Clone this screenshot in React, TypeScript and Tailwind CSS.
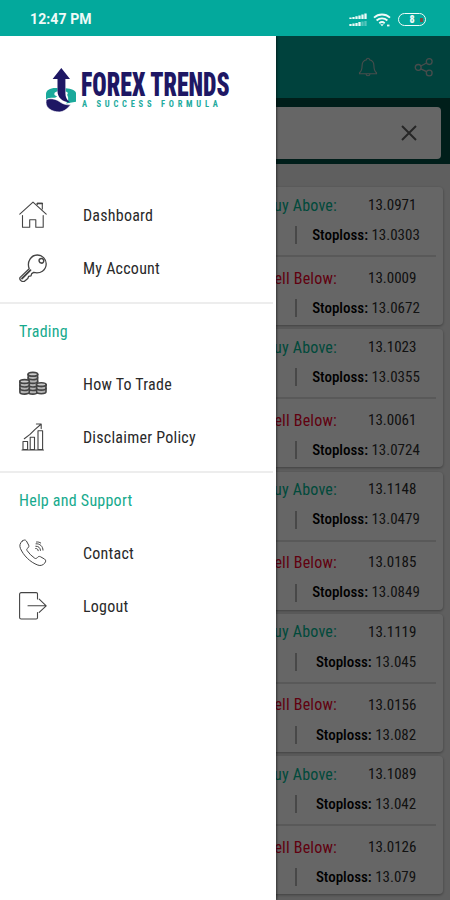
import React from 'react';

interface Signal {
  buy: string;
  buyStop: string;
  sell: string;
  sellStop: string;
}

const signals: Signal[] = [
  { buy: '13.0971', buyStop: '13.0303', sell: '13.0009', sellStop: '13.0672' },
  { buy: '13.1023', buyStop: '13.0355', sell: '13.0061', sellStop: '13.0724' },
  { buy: '13.1148', buyStop: '13.0479', sell: '13.0185', sellStop: '13.0849' },
  { buy: '13.1119', buyStop: '13.045', sell: '13.0156', sellStop: '13.082' },
  { buy: '13.1089', buyStop: '13.042', sell: '13.0126', sellStop: '13.079' },
];

const iconProps = {
  viewBox: '0 0 28 28',
  fill: 'none',
  stroke: 'currentColor',
  strokeWidth: 1.1,
  strokeLinejoin: 'round' as const,
  strokeLinecap: 'round' as const,
  className: 'mb-0.5 h-7 w-7 shrink-0 text-[#444]',
};

const HomeIcon = () => (
  <svg {...iconProps}>
    <path d="M.8 13.2 14 1.2l13.2 12M3.5 14.5v11.7h7.2v-7.5h6.1v7.5h7.4V14.5M18.3 3.4v-1h5v5.5" />
    <path d="M18.3 2.5h5" strokeWidth="1.6" />
  </svg>
);

const KeyIcon = () => (
  <svg {...iconProps} strokeWidth={1.3}>
    <path d="M10.2 14.8C7.5 7.5 12.4 1 18.3 1c5 0 8.9 4 8.9 8.8 0 6.4-5.9 10.4-12.5 8.6l-2 1.2-.7 2.2-2.4.6-.8 2-3.6 3C2.7 28.2.3 25.8.9 23.6Z" />
    <path d="m3 24.5 8.5-8.3" strokeWidth="1.8" />
    <path d="M20.6 5.1c1.4-1.3 3.8-.7 4.1 1.4.3 1.5-1 2.8-2.4 2.6-2-.2-2.9-2.6-1.7-4Z" strokeWidth="1.5" />
  </svg>
);

const Stack = ({ x, y, rows }: { x: number; y: number; rows: number }) => (
  <g>
    <path d={`M${x} ${y}v${rows * 3.6}c0 2.5 9.4 2.5 9.4 0V${y}`} fill="#b5b5b5" />
    {Array.from({ length: rows }, (_, i) => (
      <path key={i} d={`M${x} ${y + i * 3.6}c0 2.6 9.4 2.6 9.4 0`} />
    ))}
    <ellipse cx={x + 4.7} cy={y} rx="4.7" ry="1.8" fill="#ccc" />
  </g>
);

const CoinsIcon = () => (
  <svg {...iconProps} strokeWidth={1.6}>
    <Stack x={9.2} y={4.2} rows={5} />
    <Stack x={0.9} y={11.4} rows={3} />
    <Stack x={17.6} y={14.6} rows={2} />
  </svg>
);

const GrowthIcon = () => (
  <svg {...iconProps} strokeWidth={1.1}>
    <path d="M4 18.5h4.6v8H4zM11.2 14.3h4.3v12.2h-4.3zM19 7.7h4.6v18.8H19zM3 27h21.5" />
    <path d="M5.3 15.7 11 11.4l4.8-4.8 5.9-5.1M17.4 1h4.8v4.6" />
  </svg>
);

const PhoneIcon = () => (
  <svg {...iconProps} strokeWidth={1}>
    <path d="M3.2 2.1C4.7.7 6.4.6 7.4 2l2.2 4c.6 1.2.2 2.2-.8 3-1.2.9-1.3 1.6-.7 2.6a29 29 0 0 0 7.6 7.6c1 .6 1.8.4 2.7-.7.8-1 1.8-1.4 3-.8l4.2 2.4c1.4.9 1.4 2.5.3 3.8-1.8 2.3-4.3 3.2-7 2.2C11 23.2 4.4 16.4 1.4 9.4.3 6.6.9 4.1 3.2 2.1Z" />
    <path d="M17 4.8c3.8-.4 7 2.5 7 6.3M16.8 7.2c2.6-.2 4.6 1.6 4.7 4.2M16.7 9.5c1.5-.1 2.4.7 2.5 2.2M17.5 3c1.6-.2 3 .2 4.2 1" />
  </svg>
);

const LogoutIcon = () => (
  <svg {...iconProps}>
    <path d="M18.5 7V1.8C18.5.9 18 .6 17.2.6H2.2C1.2.6.6 1.2.6 2.2v23.2c0 1 .6 1.6 1.6 1.6h15c.8 0 1.3-.4 1.3-1.2v-5.2M9 13.8h18M20.2 7.2l7 6.6-7 6.6" />
  </svg>
);

const sections = [
  {
    title: '',
    items: [
      { label: 'Dashboard', icon: HomeIcon },
      { label: 'My Account', icon: KeyIcon },
    ],
  },
  {
    title: 'Trading',
    items: [
      { label: 'How To Trade', icon: CoinsIcon },
      { label: 'Disclaimer Policy', icon: GrowthIcon },
    ],
  },
  {
    title: 'Help and Support',
    items: [
      { label: 'Contact', icon: PhoneIcon },
      { label: 'Logout', icon: LogoutIcon },
    ],
  },
];

const StatusBar = () => (
  <div className="flex h-9 items-center justify-between bg-[#03a99c] pt-[3px] pr-6 pl-[30px] text-[#effaf8]">
    <span className="font-[Roboto,sans-serif] text-[14px] font-bold tracking-[0.1px] [font-stretch:100%]">12:47 PM</span>
    <div className="flex items-center gap-1.5">
      <svg viewBox="0 0 18 14" className="h-3.5 w-[18px]" stroke="currentColor" strokeWidth="2.3">
        <path d="M1.5 6V4.5M4.5 6V4M7.5 6V3.2M10.5 6V2.4M13.5 6V1.4M16.5 6V.4" />
        <path d="M1.5 13v-2M4.5 13v-2.4M7.5 13v-3M10.5 13V9" />
        <path d="M13.5 13V8.5M16.5 13V8" opacity=".35" />
      </svg>
      <svg viewBox="0 0 18 14" className="h-3.5 w-[18px]" fill="none" stroke="currentColor" strokeWidth="1.8">
        <path d="M1 4.7c4.6-4.3 11.4-4.3 16 0M3.6 7.5c3.1-2.9 7.7-2.9 10.8 0M6.3 10.2c1.6-1.4 3.8-1.4 5.4 0" />
        <path d="m7.2 11.3 1.8 2 1.8-2Z" fill="currentColor" stroke="none" />
        <path d="M14 12.5h2.5" />
      </svg>
      <div className="ml-[1px] flex h-[13px] w-7 items-center justify-center rounded-full border-[1.5px] border-[#effaf8] text-[10px] leading-none font-black">
        <span className="ml-2">8</span>
        <span className="ml-[5px] h-1 w-[3px] bg-[#7b4a42]" />
      </div>
    </div>
  </div>
);

const AppBar = () => (
  <div className="flex h-[62px] shrink-0 items-center justify-end gap-[36px] bg-[#00a699] pr-4 text-[#b4bfbe]">
    <svg viewBox="0 0 20 20" className="h-5 w-5" fill="none" stroke="currentColor" strokeWidth="1.1">
      <path d="M8.5 2.7c0-2 3-2 3 0 3.2.8 4.4 3.1 4.4 5.8 0 4 .6 5.9 2.6 7.2v1H1.5v-1c2-1.3 2.6-3.2 2.6-7.2 0-2.7 1.2-5 4.4-5.8ZM8 17c.2 2.4 3.8 2.4 4 0" />
    </svg>
    <svg viewBox="0 0 20 20" className="h-5 w-5" fill="none" stroke="currentColor" strokeWidth="1.3">
      <circle cx="4.2" cy="10.4" r="2.9" />
      <circle cx="15.2" cy="4.6" r="2.9" />
      <circle cx="15.2" cy="16" r="2.9" />
      <path d="m6.8 9 5.8-3M6.8 11.8l5.8 2.9" />
    </svg>
  </div>
);

const Quote = ({ label, color, value, stop }: { label: string; color: string; value: string; stop: string }) => (
  <div className="flex flex-col">
    <div className="flex h-[30px] items-center">
      <span className={`w-[337px] shrink-0 pt-px text-right tracking-[0.2px] whitespace-nowrap ${color}`}>{label}</span>
      <span className="pl-[31px] text-[15px] text-[#2c2c2c]">{value}</span>
    </div>
    <div className="flex h-[30px] items-center pl-[295px]">
      <span className="h-[18px] w-0.5 bg-[#b4b4b4]" />
      <span className="w-[138px] text-center text-[15px] whitespace-nowrap text-[#303030]">
        <b className="font-medium text-black">Stoploss:</b> {stop}
      </span>
    </div>
  </div>
);

const SignalCard = ({ signal }: { signal: Signal }) => (
  <div className="mr-[7px] h-[138px] shrink-0 rounded bg-white pt-[3px] shadow-[0_1px_3px_rgba(0,0,0,0.35)]">
    <Quote label="Buy Above:" color="text-[#00b894]" value={signal.buy} stop={signal.buyStop} />
    <div className="mt-[5px] mr-[7px] mb-[6px] h-0.5 bg-[#dedede]" />
    <Quote label="Sell Below:" color="text-[#f00028]" value={signal.sell} stop={signal.sellStop} />
  </div>
);

const Logo = () => (
  <div className="flex h-[46px] items-start pl-[45px]">
    <svg viewBox="0 0 33 46" className="h-[46px] w-[33px]">
      <path d="M10.5 20C5 20 .8 22.4 1 26.4v6c.8-2.2 3.2-2.8 6.3-2.6 2.5.1 4-.5 4.7-1.6-2-.2-3-1.2-2.6-2.6.2-1 1.4-1.9 3.1-2.3V20ZM20.7 20.3v3.2c2.1.6 2.8 1.9 1.4 3.3 1.8 3.4 1.5 6.4-1.1 8.7l10-1.8V25c-.3-2.6-4.8-4.2-10.3-4.7Z" fill="#1aa99b" />
      <path d="M16.3 0 25 11h-4.6v14.2c0 3.9 1.3 6.6 4.6 9.2-8.2-.8-12.5-5-12.5-11.7V11H7.6Z" fill="#1e1764" />
      <path d="M1.2 31.7c3.8-1.8 9.2-.9 12.8 1.6 3.5 2.6 6.7 3.8 11.6 3.5-2.6 3.5-6.7 7.1-11.4 7.1C7.2 43.9 1 40.4 1 34.6Z" fill="#1e1764" stroke="#fff" strokeWidth=".6" />
    </svg>
    <div className="ml-[3px] flex flex-col pt-[3px]">
      <span className="h-[28px] w-[150px] origin-left scale-x-[0.723] text-[33px] leading-[28px] font-black whitespace-nowrap text-[#1e1764]">FOREX TRENDS</span>
      <span className="pl-px text-[8.5px] leading-[11px] font-bold tracking-[3.75px] whitespace-nowrap text-[#22aa9d]">A SUCCESS FORMULA</span>
    </div>
  </div>
);

const Drawer = () => (
  <aside className="absolute inset-y-0 left-0 w-[275.5px] bg-white pt-8 shadow-[1px_0_2px_rgba(0,0,0,0.5)]">
    <Logo />
    <nav className="mt-[75px] flex flex-col tracking-[0.24px]">
      {sections.map((section, index) => (
        <div key={index} className={index > 0 ? 'mt-[7px] mr-[3px] border-t-2 border-[#ededed]' : ''}>
          {section.title && (
            <h2 className="flex h-[54px] items-center pt-px pl-[19px] text-base text-[#16aa8d]">{section.title}</h2>
          )}
          {section.items.map(({ label, icon: Icon }) => (
            <a key={label} className="flex h-[53px] items-center gap-9 pl-[19px] text-base text-[#2a2a2a]">
              <Icon />
              <span>{label}</span>
            </a>
          ))}
        </div>
      ))}
    </nav>
  </aside>
);

export default function App() {
  return (
    <div className="flex h-[900px] w-[450px] flex-col overflow-hidden font-[Roboto_Condensed,Roboto,sans-serif] text-base [font-stretch:75%]">
      <StatusBar />
      <main className="relative flex min-h-0 flex-1 flex-col overflow-hidden bg-[#eee]">
        <AppBar />
        <div className="h-[66px] shrink-0 bg-[#004d43] pt-[9px] pr-[9px]">
          <div className="flex h-[52px] items-center justify-end rounded bg-white pr-6">
            <svg viewBox="0 0 16 16" className="h-4 w-4" stroke="#606060" strokeWidth="2">
              <path d="m1 1 14 14M15 1 1 15" />
            </svg>
          </div>
        </div>
        <div className="flex flex-col gap-[4.3px] pt-[23px]">
          {signals.map((signal) => (
            <SignalCard key={signal.buy} signal={signal} />
          ))}
        </div>
        <div className="absolute inset-0 bg-black/60" />
        <Drawer />
      </main>
    </div>
  );
}
